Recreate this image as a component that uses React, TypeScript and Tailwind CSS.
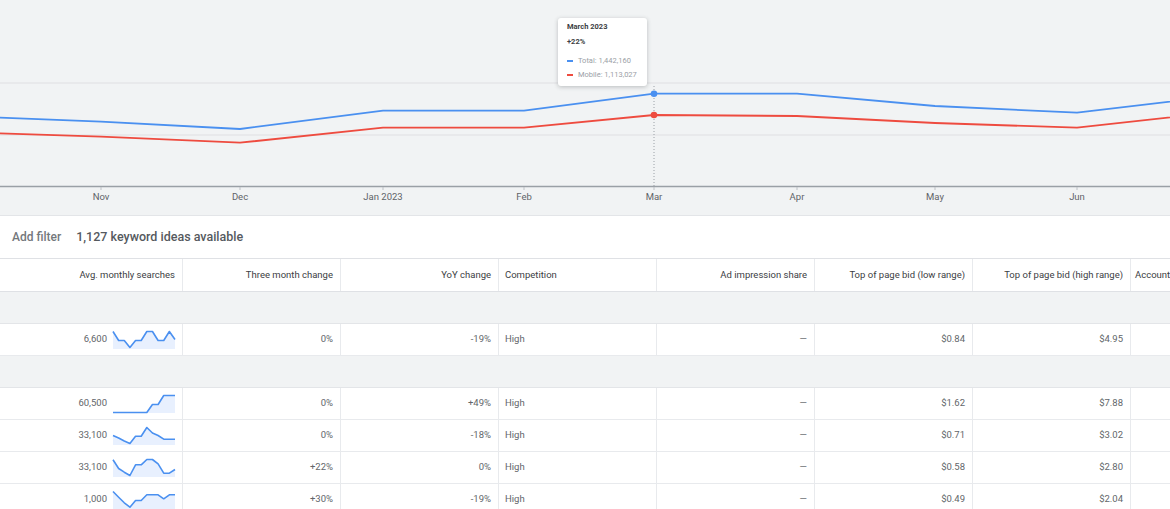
import React from "react";

const blue: [number, number][] = [
  [-41, 116], [101, 121.7], [240, 129], [383, 110.7], [524, 110.7], [654, 93.7],
  [797, 93.7], [935, 106], [1077, 112.7], [1215, 96.4],
];
const red: [number, number][] = [
  [-41, 132], [101, 136.7], [240, 142.7], [383, 127.7], [524, 127.7], [654, 115],
  [797, 116], [935, 123], [1077, 127.7], [1215, 112.3],
];
const months: [string, number][] = [
  ["Nov", 101], ["Dec", 240], ["Jan 2023", 383], ["Feb", 524], ["Mar", 654],
  ["Apr", 797], ["May", 935], ["Jun", 1077],
];

const pts = (a: [number, number][]) => a.map(([x, y]) => `${x},${y}`).join(" ");

function Chart() {
  return (
    <div className="relative h-[216px] border-b border-[#e3e5e8] bg-[#f1f3f4]">
      <svg width="1170" height="215" viewBox="0 0 1170 215" className="block">
        <line x1="0" y1="83" x2="1170" y2="83" stroke="#e4e6e9" strokeWidth="1.5" />
        <line x1="0" y1="135" x2="1170" y2="135" stroke="#e4e6e9" strokeWidth="1.5" />
        <line x1="0" y1="186.5" x2="1170" y2="186.5" stroke="#9aa0a6" strokeWidth="1.5" />
        {months.map(([m, x]) => (
          <line key={m + "t"} x1={x} y1="187" x2={x} y2="190" stroke="#bdc1c6" strokeWidth="1" />
        ))}
        <line x1="654" y1="86" x2="654" y2="186" stroke="#9aa0a6" strokeWidth="1" strokeDasharray="1 2" />
        <polyline points={pts(blue)} fill="none" stroke="#4a90f0" strokeWidth="1.8" strokeLinejoin="round" />
        <polyline points={pts(red)} fill="none" stroke="#ee4b3f" strokeWidth="1.8" strokeLinejoin="round" />
        <circle cx="654" cy="93.7" r="3.3" fill="#4a90f0" />
        <circle cx="654" cy="115" r="3.3" fill="#ee4b3f" />
        {months.map(([m, x]) => (
          <text
            key={m}
            x={x}
            y="200"
            textAnchor="middle"
            fontSize="9.5"
            fill="#5f6368"
            fontFamily="Roboto, 'Liberation Sans', sans-serif"
          >
            {m}
          </text>
        ))}
      </svg>
      <div className="absolute left-[558px] top-[18px] flex h-[68px] w-[89px] flex-col rounded-[3px] bg-white pl-[9px] shadow-[0_1px_4px_rgba(60,64,67,0.3)]">
        <div className="mt-[4px] text-[7.5px] font-bold leading-[10px] text-[#3c4043]">March 2023</div>
        <div className="mt-[5px] text-[7.5px] font-bold leading-[10px] text-[#3c4043]">+22%</div>
        <div className="mt-[9px] flex items-center gap-[5px] text-[7.5px] leading-[10px] text-[#9aa0a6]">
          <span className="h-[2px] w-[6px] bg-[#4a90f0]" />
          <span>Total: 1,442,160</span>
        </div>
        <div className="mt-[4px] flex items-center gap-[5px] text-[7.5px] leading-[10px] text-[#9aa0a6]">
          <span className="h-[2px] w-[6px] bg-[#ee4b3f]" />
          <span>Mobile: 1,113,027</span>
        </div>
      </div>
    </div>
  );
}

function Spark({ v }: { v: number[] }) {
  const w = 62;
  const h = 18;
  const step = w / (v.length - 1);
  const p = v.map((y, i) => `${(i * step).toFixed(2)},${(y + 0.5).toFixed(2)}`);
  const area = `0,${h} ${p.join(" ")} ${w},${h}`;
  return (
    <svg width={w} height={h} viewBox={`0 0 ${w} ${h}`} className="block shrink-0 overflow-visible">
      <polygon points={area} fill="#e8f0fe" />
      <polyline points={p.join(" ")} fill="none" stroke="#4a90f0" strokeWidth="1.6" strokeLinejoin="round" />
    </svg>
  );
}

type Row = {
  n: string;
  s: number[];
  t: string;
  y: string;
  lo: string;
  hi: string;
};

const cellR = "flex h-full w-[158px] shrink-0 items-center justify-end border-l border-[#e8eaed] pr-[7px]";
const cellL = "flex h-full w-[158px] shrink-0 items-center justify-start border-l border-[#e8eaed] pl-[6px]";

function DataRow({ r }: { r: Row }) {
  return (
    <div className="flex h-[32px] border-b border-[#e8eaed] bg-white text-[9.5px] text-[#62666a]">
      <div className="flex h-full w-[182px] shrink-0 items-center justify-end gap-[6px] pr-[7px]">
        <span>{r.n}</span>
        <Spark v={r.s} />
      </div>
      <div className={cellR}>{r.t}</div>
      <div className={cellR}>{r.y}</div>
      <div className={cellL}>High</div>
      <div className={cellR}>—</div>
      <div className={cellR}>{r.lo}</div>
      <div className={cellR}>{r.hi}</div>
      <div className={cellL}></div>
    </div>
  );
}

function GroupRow() {
  return <div className="h-[32px] border-b border-[#e3e5e8] bg-[#f1f3f4]" />;
}

const rows: Row[] = [
  { n: "6,600", s: [0, 9, 9, 16, 9, 9, 0, 0, 9, 9, 0, 8], t: "0%", y: "-19%", lo: "$0.84", hi: "$4.95" },
  { n: "60,500", s: [17, 17, 17, 17, 17, 17, 17, 9, 9, 0, 0, 0], t: "0%", y: "+49%", lo: "$1.62", hi: "$7.88" },
  { n: "33,100", s: [8, 10.5, 13.5, 16, 8.7, 8.7, 0, 5.5, 8, 11.7, 11.7, 11.7], t: "0%", y: "-18%", lo: "$0.71", hi: "$3.02" },
  { n: "33,100", s: [0.3, 9, 12.7, 16, 5.3, 5.3, 0, 0, 4.3, 13.7, 13.7, 10], t: "+22%", y: "0%", lo: "$0.58", hi: "$2.80" },
  { n: "1,000", s: [0, 5.7, 11.3, 15.7, 9, 9, 3.3, 3.3, 3.3, 7.3, 3.3, 3.3], t: "+30%", y: "-19%", lo: "$0.49", hi: "$2.04" },
];

export default function App() {
  return (
    <div
      className="h-[509px] w-[1170px] overflow-hidden bg-white"
      style={{ fontFamily: "Roboto, 'Liberation Sans', Arial, sans-serif" }}
    >
      <Chart />
      <div className="flex h-[42px] items-center">
        <span className="pl-[12px] text-[12px] font-medium text-[#74787c]">Add filter</span>
        <span className="ml-[15px] text-[12.5px] font-medium text-[#55595e]">1,127 keyword ideas available</span>
      </div>
      <div className="w-[1300px]">
        <div className="flex h-[34px] border-y border-[#dfe1e5] bg-white text-[9.5px] text-[#3c4043]">
          <div className="flex h-full w-[182px] shrink-0 items-center justify-end pr-[7px]">Avg. monthly searches</div>
          <div className={cellR}>Three month change</div>
          <div className={cellR}>YoY change</div>
          <div className={cellL}>Competition</div>
          <div className={cellR}>Ad impression share</div>
          <div className={cellR}>Top of page bid (low range)</div>
          <div className={cellR}>Top of page bid (high range)</div>
          <div className="flex h-full w-[158px] shrink-0 items-center border-l border-[#e8eaed] pl-[4px]">Account status</div>
        </div>
        <GroupRow />
        <DataRow r={rows[0]} />
        <GroupRow />
        {rows.slice(1).map((r, i) => (
          <DataRow key={i} r={r} />
        ))}
      </div>
    </div>
  );
}
